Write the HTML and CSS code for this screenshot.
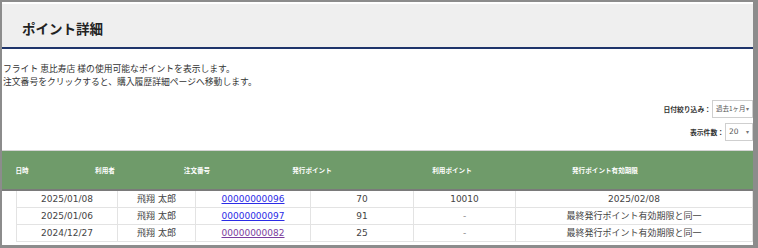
FILE: index.html
```html
<!DOCTYPE html>
<html lang="ja">
<head>
    <meta charset="UTF-8">
    <title>ポイント詳細</title>
    <link rel="stylesheet" href="styles.css">
</head>
<body>
    <div class="frame">
        <!-- タイトル -->
        <header class="page-head">
            <h1>ポイント詳細</h1>
        </header>

        <div class="lead">
            <p>フライト 恵比寿店 様の使用可能なポイントを表示します。</p>
            <p>注文番号をクリックすると、購入履歴詳細ページへ移動します。</p>
        </div>

        <!-- 絞り込み -->
        <div class="filters">
            <div class="filter-row">
                <span class="filter-label">日付絞り込み：</span>
                <span class="select select-period">過去1ヶ月</span>
            </div>
            <div class="filter-row">
                <span class="filter-label">表示件数：</span>
                <span class="select select-count">20</span>
            </div>
        </div>

        <!-- 固定ヘッダー -->
        <div class="grid-head">
            <span>日時</span>
            <span>利用者</span>
            <span>注文番号</span>
            <span>発行ポイント</span>
            <span>利用ポイント</span>
            <span>発行ポイント有効期限</span>
            <span></span>
        </div>

        <table class="point-table">
            <colgroup>
                <col class="c-date">
                <col class="c-user">
                <col class="c-order">
                <col class="c-issue">
                <col class="c-use">
                <col>
            </colgroup>
            <tbody>
                <tr>
                    <td>2025/01/08</td>
                    <td>飛翔 太郎</td>
                    <td><a href="#">00000000096</a></td>
                    <td>70</td>
                    <td>10010</td>
                    <td>2025/02/08</td>
                </tr>
                <tr>
                    <td>2025/01/06</td>
                    <td>飛翔 太郎</td>
                    <td><a href="#">00000000097</a></td>
                    <td>91</td>
                    <td class="dash">-</td>
                    <td>最終発行ポイント有効期限と同一</td>
                </tr>
                <tr>
                    <td>2024/12/27</td>
                    <td>飛翔 太郎</td>
                    <td><a href="#" class="visited">00000000082</a></td>
                    <td>25</td>
                    <td class="dash">-</td>
                    <td>最終発行ポイント有効期限と同一</td>
                </tr>
            </tbody>
        </table>
    </div>
</body>
</html>
```

FILE: styles.css
```css
/* リセット */
html, body {
    margin: 0;
    padding: 0;
    background: #fff;
}

body {
    font-family: "Noto Sans CJK JP", sans-serif;
    color: #333;
}

/* 外枠 */
.frame {
    height: 248px;
    box-sizing: border-box;
    border-top: 2px solid #8c8c8c;
    border-left: 2px solid #8c8c8c;
    border-right: 5px solid #8c8c8c;
    border-bottom: 3px solid #8c8c8c;
    overflow: hidden;
}

/* タイトル */
.page-head {
    margin-top: 2px;
    height: 45px;
    padding-top: 4px;
    box-sizing: border-box;
    background: #efefef;
    border-bottom: 2px solid #1f356b;
}

.page-head h1 {
    margin: 0;
    padding-left: 20px;
    font-size: 13.5px;
    line-height: 41px;
    font-weight: bold;
    color: #222;
}

.lead {
    padding: 13px 0 0 1px;
}

.lead p {
    margin: 0;
    font-size: 8.8px;
    line-height: 13px;
    color: #333;
}

/* 絞り込み */
.filters {
    margin-top: 12px;
    display: flex;
    flex-direction: column;
    align-items: flex-end;
    gap: 5px;
}

.filter-row {
    display: flex;
    align-items: center;
    height: 18px;
}

.filter-label {
    font-size: 6.8px;
    font-weight: bold;
    color: #333;
    padding-right: 1px;
}

.select {
    position: relative;
    height: 18px;
    box-sizing: border-box;
    border: 1px solid #cfcfcf;
    font-size: 6.5px;
    line-height: 15px;
    padding-left: 3px;
    color: #555;
    background: #fff;
}

.select::after {
    content: "▾";
    position: absolute;
    right: 3px;
    top: 0;
    font-size: 6px;
    color: #777;
}

.select-period {
    width: 41px;
}

.select-count {
    width: 28px;
    font-family: "DejaVu Sans", sans-serif;
    font-size: 7.5px;
}

/* ヘッダー */
.grid-head {
    margin-top: 9px;
    display: grid;
    grid-template-columns: 40px 126px 58px 172px 108px 198px 1fr;
    align-items: center;
    height: 38px;
    background: #6f9b6a;
    border-top: 1px solid #d4d4d4;
    border-bottom: 2px solid #7a7a7a;
}

.grid-head span {
    text-align: center;
    font-size: 6.6px;
    font-weight: bold;
    color: #fff;
}

/* テーブル */
.point-table {
    margin-left: 14px;
    width: 737px;
    border-collapse: collapse;
    table-layout: fixed;
    font-family: "DejaVu Sans", "Noto Sans CJK JP", sans-serif;
    font-size: 9px;
    color: #444;
}

.c-date { width: 101px; }
.c-user { width: 78px; }
.c-order { width: 115px; }
.c-issue { width: 103px; }
.c-use { width: 102px; }

.point-table td {
    height: 16px;
    padding: 0;
    text-align: center;
    border: 1px solid #e3e3e3;
    border-top: none;
    line-height: 16px;
    white-space: nowrap;
}

.point-table td:last-child {
    font-family: "Noto Sans CJK JP", sans-serif;
}

.point-table tr:first-child td:last-child {
    font-family: "DejaVu Sans", sans-serif;
}

.point-table td a {
    color: #2b2be6;
    text-decoration: underline;
}

.point-table td a.visited {
    color: #7b3d9e;
}

.dash {
    color: #888;
}
```
